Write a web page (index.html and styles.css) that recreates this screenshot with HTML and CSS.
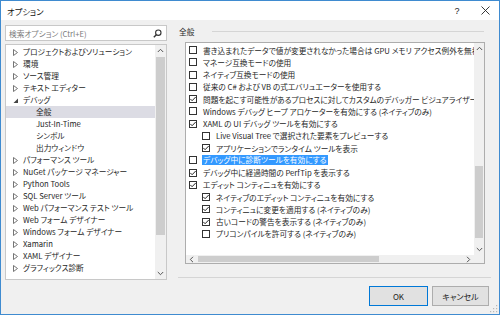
FILE: index.html
```html
<!DOCTYPE html>
<html lang="ja">
<head>
<meta charset="utf-8">
<link rel="stylesheet" href="styles.css">
</head>
<body>
<div class="window">
  <div class="titlebar">
    <span class="title">オプション</span>
    <span class="tb-btn help">?</span>
    <span class="tb-btn close">
      <svg width="9" height="9" viewBox="0 0 9 9"><path d="M0.5 0.5 L8.5 8.5 M8.5 0.5 L0.5 8.5" stroke="#222" stroke-width="0.9" fill="none"/></svg>
    </span>
  </div>
  <div class="main">
    <div class="left">
      <div class="search">
        <span class="ph">検索オプション (Ctrl+E)</span>
        <svg class="mag" width="9" height="9" viewBox="0 0 9 9"><circle cx="5.3" cy="3.7" r="2.7" fill="none" stroke="#333" stroke-width="1.1"/><path d="M3.3 5.7 L0.8 8.2" stroke="#333" stroke-width="1.4"/></svg>
      </div>
      <div class="tree">
        <div class="tree-list">
          <div class="trow"><span class="exp"><svg width="5" height="7" viewBox="0 0 5 7"><path d="M0.5 0.5 L4.5 3.5 L0.5 6.5 Z" fill="none" stroke="#666" stroke-width="0.9"/></svg></span>プロジェクトおよびソリューション</div>
          <div class="trow"><span class="exp"><svg width="5" height="7" viewBox="0 0 5 7"><path d="M0.5 0.5 L4.5 3.5 L0.5 6.5 Z" fill="none" stroke="#666" stroke-width="0.9"/></svg></span>環境</div>
          <div class="trow"><span class="exp"><svg width="5" height="7" viewBox="0 0 5 7"><path d="M0.5 0.5 L4.5 3.5 L0.5 6.5 Z" fill="none" stroke="#666" stroke-width="0.9"/></svg></span>ソース管理</div>
          <div class="trow"><span class="exp"><svg width="5" height="7" viewBox="0 0 5 7"><path d="M0.5 0.5 L4.5 3.5 L0.5 6.5 Z" fill="none" stroke="#666" stroke-width="0.9"/></svg></span>テキスト エディター</div>
          <div class="trow"><span class="exp"><svg width="5" height="7" viewBox="0 0 5 7"><path d="M5 1.5 L5 6 L0.5 6 Z" fill="#444"/></svg></span>デバッグ</div>
          <div class="trow child sel">全般</div>
          <div class="trow child">Just-In-Time</div>
          <div class="trow child">シンボル</div>
          <div class="trow child">出力ウィンドウ</div>
          <div class="trow"><span class="exp"><svg width="5" height="7" viewBox="0 0 5 7"><path d="M0.5 0.5 L4.5 3.5 L0.5 6.5 Z" fill="none" stroke="#666" stroke-width="0.9"/></svg></span>パフォーマンス ツール</div>
          <div class="trow"><span class="exp"><svg width="5" height="7" viewBox="0 0 5 7"><path d="M0.5 0.5 L4.5 3.5 L0.5 6.5 Z" fill="none" stroke="#666" stroke-width="0.9"/></svg></span>NuGet パッケージ マネージャー</div>
          <div class="trow"><span class="exp"><svg width="5" height="7" viewBox="0 0 5 7"><path d="M0.5 0.5 L4.5 3.5 L0.5 6.5 Z" fill="none" stroke="#666" stroke-width="0.9"/></svg></span>Python Tools</div>
          <div class="trow"><span class="exp"><svg width="5" height="7" viewBox="0 0 5 7"><path d="M0.5 0.5 L4.5 3.5 L0.5 6.5 Z" fill="none" stroke="#666" stroke-width="0.9"/></svg></span>SQL Server ツール</div>
          <div class="trow"><span class="exp"><svg width="5" height="7" viewBox="0 0 5 7"><path d="M0.5 0.5 L4.5 3.5 L0.5 6.5 Z" fill="none" stroke="#666" stroke-width="0.9"/></svg></span>Web パフォーマンス テスト ツール</div>
          <div class="trow"><span class="exp"><svg width="5" height="7" viewBox="0 0 5 7"><path d="M0.5 0.5 L4.5 3.5 L0.5 6.5 Z" fill="none" stroke="#666" stroke-width="0.9"/></svg></span>Web フォーム デザイナー</div>
          <div class="trow"><span class="exp"><svg width="5" height="7" viewBox="0 0 5 7"><path d="M0.5 0.5 L4.5 3.5 L0.5 6.5 Z" fill="none" stroke="#666" stroke-width="0.9"/></svg></span>Windows フォーム デザイナー</div>
          <div class="trow"><span class="exp"><svg width="5" height="7" viewBox="0 0 5 7"><path d="M0.5 0.5 L4.5 3.5 L0.5 6.5 Z" fill="none" stroke="#666" stroke-width="0.9"/></svg></span>Xamarin</div>
          <div class="trow"><span class="exp"><svg width="5" height="7" viewBox="0 0 5 7"><path d="M0.5 0.5 L4.5 3.5 L0.5 6.5 Z" fill="none" stroke="#666" stroke-width="0.9"/></svg></span>XAML デザイナー</div>
          <div class="trow"><span class="exp"><svg width="5" height="7" viewBox="0 0 5 7"><path d="M0.5 0.5 L4.5 3.5 L0.5 6.5 Z" fill="none" stroke="#666" stroke-width="0.9"/></svg></span>グラフィックス診断</div>
        </div>
        <div class="vscroll">
          <svg class="arr" width="7" height="5" viewBox="0 0 7 5"><path d="M0.8 4 L3.5 1.3 L6.2 4" fill="none" stroke="#555" stroke-width="1"/></svg>
          <div class="track"><div class="thumb tree-thumb"></div></div>
          <svg class="arr" width="7" height="5" viewBox="0 0 7 5"><path d="M0.8 1 L3.5 3.7 L6.2 1" fill="none" stroke="#555" stroke-width="1"/></svg>
        </div>
      </div>
    </div>
    <div class="right">
      <div class="ghead"><span class="gtitle">全般</span><span class="grule"></span></div>
      <div class="listbox">
        <div class="list-main">
          <div class="rows">
            <div class="crow"><span class="cb"></span>書き込まれたデータで値が変更されなかった場合は GPU メモリ アクセス例外を無視する</div>
            <div class="crow"><span class="cb"></span>マネージ互換モードの使用</div>
            <div class="crow"><span class="cb"></span>ネイティブ互換モードの使用</div>
            <div class="crow"><span class="cb"></span>従来の C# および VB の式エバリュエーターを使用する</div>
            <div class="crow"><span class="cb on"><svg width="8" height="8" viewBox="0 0 8 8"><path d="M1.3 3.9 L3.1 5.7 L6.7 2" fill="none" stroke="#222" stroke-width="1"/></svg></span>問題を起こす可能性があるプロセスに対してカスタムのデバッガー ビジュアライザーを使用する</div>
            <div class="crow"><span class="cb"></span>Windows デバッグ ヒープ アロケーターを有効にする (ネイティブのみ)</div>
            <div class="crow"><span class="cb on"><svg width="8" height="8" viewBox="0 0 8 8"><path d="M1.3 3.9 L3.1 5.7 L6.7 2" fill="none" stroke="#222" stroke-width="1"/></svg></span>XAML の UI デバッグ ツールを有効にする</div>
            <div class="crow sub"><span class="cb"></span>Live Visual Tree で選択された要素をプレビューする</div>
            <div class="crow sub"><span class="cb on"><svg width="8" height="8" viewBox="0 0 8 8"><path d="M1.3 3.9 L3.1 5.7 L6.7 2" fill="none" stroke="#222" stroke-width="1"/></svg></span>アプリケーションでランタイム ツールを表示</div>
            <div class="crow"><span class="cb"></span><span class="hl">デバッグ中に診断ツールを有効にする</span></div>
            <div class="crow"><span class="cb on"><svg width="8" height="8" viewBox="0 0 8 8"><path d="M1.3 3.9 L3.1 5.7 L6.7 2" fill="none" stroke="#222" stroke-width="1"/></svg></span>デバッグ中に経過時間の PerfTip を表示する</div>
            <div class="crow"><span class="cb on"><svg width="8" height="8" viewBox="0 0 8 8"><path d="M1.3 3.9 L3.1 5.7 L6.7 2" fill="none" stroke="#222" stroke-width="1"/></svg></span>エディット コンティニュを有効にする</div>
            <div class="crow sub"><span class="cb on"><svg width="8" height="8" viewBox="0 0 8 8"><path d="M1.3 3.9 L3.1 5.7 L6.7 2" fill="none" stroke="#222" stroke-width="1"/></svg></span>ネイティブのエディット コンティニュを有効にする</div>
            <div class="crow sub"><span class="cb on"><svg width="8" height="8" viewBox="0 0 8 8"><path d="M1.3 3.9 L3.1 5.7 L6.7 2" fill="none" stroke="#222" stroke-width="1"/></svg></span>コンティニュに変更を適用する (ネイティブのみ)</div>
            <div class="crow sub"><span class="cb on"><svg width="8" height="8" viewBox="0 0 8 8"><path d="M1.3 3.9 L3.1 5.7 L6.7 2" fill="none" stroke="#222" stroke-width="1"/></svg></span>古いコードの警告を表示する (ネイティブのみ)</div>
            <div class="crow sub"><span class="cb"></span>プリコンパイルを許可する (ネイティブのみ)</div>
          </div>
          <div class="vscroll">
            <svg class="arr" width="7" height="5" viewBox="0 0 7 5"><path d="M0.8 4 L3.5 1.3 L6.2 4" fill="none" stroke="#555" stroke-width="1"/></svg>
            <div class="track"><div class="thumb list-thumb"></div></div>
            <svg class="arr" width="7" height="5" viewBox="0 0 7 5"><path d="M0.8 1 L3.5 3.7 L6.2 1" fill="none" stroke="#555" stroke-width="1"/></svg>
          </div>
        </div>
        <div class="hbar">
          <div class="hscroll">
            <svg class="arr" width="5" height="7" viewBox="0 0 5 7"><path d="M4 0.8 L1.3 3.5 L4 6.2" fill="none" stroke="#555" stroke-width="1"/></svg>
            <div class="htrack"><div class="hthumb"></div></div>
            <svg class="arr" width="5" height="7" viewBox="0 0 5 7"><path d="M1 0.8 L3.7 3.5 L1 6.2" fill="none" stroke="#555" stroke-width="1"/></svg>
          </div>
          <div class="corner"></div>
        </div>
      </div>
      <div class="gfoot"></div>
    </div>
  </div>
  <div class="footer">
    <button class="btn default">OK</button>
    <button class="btn">キャンセル</button>
  </div>
  <svg class="grip" width="8" height="8" viewBox="0 0 8 8"><g fill="#b8b8b8"><rect x="6" y="0" width="1.2" height="1.2"/><rect x="3" y="3" width="1.2" height="1.2"/><rect x="6" y="3" width="1.2" height="1.2"/><rect x="0" y="6" width="1.2" height="1.2"/><rect x="3" y="6" width="1.2" height="1.2"/><rect x="6" y="6" width="1.2" height="1.2"/></g></svg>
</div>
</body>
</html>
```

FILE: styles.css
```css
* { box-sizing: border-box; }
html, body { margin: 0; padding: 0; }
body {
  font-family: "Noto Sans CJK JP", "Noto Sans", sans-serif;
  font-size: 7.7px;
  font-feature-settings: "palt";
  color: #262626;
  background: #f0f0f0;
}
.window {
  position: relative;
  width: 500px;
  height: 315px;
  border: 1px solid #3f8bd0;
  background: #f0f0f0;
  display: flex;
  flex-direction: column;
}
.titlebar {
  height: 19px;
  background: #fff;
  display: flex;
  align-items: center;
  padding-left: 6px;
  flex: none;
}
.title { flex: 1; font-size: 8.3px; color: #111; }
.tb-btn {
  width: 28px;
  height: 19px;
  display: flex;
  align-items: center;
  justify-content: center;
  font-family: "Liberation Sans", sans-serif;
  font-size: 9px;
  color: #222;
}
.main {
  display: flex;
  padding: 5px 0 0 4px;
  height: 263px;
  flex: none;
}
.left {
  width: 162px;
  display: flex;
  flex-direction: column;
  gap: 3px;
}
.search {
  height: 16px;
  background: #fff;
  border: 1px solid #c8c8c8;
  display: flex;
  align-items: center;
  padding: 0 4px 0 3px;
}
.ph { flex: 1; color: #7a7a7a; white-space: nowrap; }
.mag { flex: none; }
.tree {
  height: 236px;
  background: #fff;
  border: 1px solid #c8c8c8;
  display: flex;
  overflow: hidden;
}
.tree-list {
  flex: 1;
  padding-top: 1px;
  overflow: hidden;
}
.trow {
  height: 12px;
  line-height: 12px;
  display: flex;
  align-items: center;
  white-space: nowrap;
  padding-left: 7px;
}
.trow.child { padding-left: 30px; }
.trow.sel { background: #dcdce4; }
.exp {
  width: 10px;
  flex: none;
  display: flex;
  align-items: center;
}
.exp svg { display: block; }
.vscroll {
  width: 11px;
  flex: none;
  background: #f0f0f0;
  display: flex;
  flex-direction: column;
  align-items: center;
}
.vscroll .arr { flex: none; margin: 3px 0; display: block; }
.track { flex: 1; width: 100%; padding: 0 1px; display: flex; flex-direction: column; }
.thumb { background: #cdcdcd; width: 100%; }
.tree-thumb { margin-top: 1px; height: 178px; }
.list-thumb { margin-top: 112px; height: 72px; }

.right {
  margin-left: 11px;
  width: 314px;
  display: flex;
  flex-direction: column;
}
.ghead {
  height: 12px;
  display: flex;
  align-items: center;
  padding-left: 1px;
}
.gtitle { flex: none; width: 33px; }
.grule { flex: none; width: 272px; height: 1px; background: #d5d5d5; margin-top: 1px; }
.listbox {
  margin: 5px 0 0 7px;
  width: 300px;
  height: 222px;
  background: #fff;
  border: 1px solid #adadad;
  display: flex;
  flex-direction: column;
}
.list-main { flex: 1; display: flex; min-height: 0; }
.rows {
  flex: 1;
  overflow: hidden;
  padding-top: 1px;
}
.crow {
  height: 12.25px;
  display: flex;
  align-items: center;
  white-space: nowrap;
  padding-left: 3px;
}
.crow.sub { padding-left: 16px; }
.cb {
  width: 8px;
  height: 8px;
  flex: none;
  border: 1px solid #333;
  background: #fff;
  margin-right: 6px;
  position: relative;
}
.cb svg { position: absolute; left: -1px; top: -1px; }
.hl { background: #3399ff; color: #fff; padding: 0 1px; margin-left: -1px; line-height: 10px; }
.list-main .vscroll { width: 10px; }
.hbar { height: 8px; display: flex; flex: none; }
.hscroll {
  flex: 1;
  background: #f0f0f0;
  display: flex;
  align-items: center;
}
.hscroll .arr { margin: 0 3px; flex: none; }
.htrack { flex: 1; height: 100%; padding: 1px 0; }
.hthumb { margin-left: 1px; width: 181px; height: 100%; background: #cdcdcd; }
.corner { width: 10px; background: #f0f0f0; }
.gfoot {
  margin-top: 13px;
  height: 1px;
  background: #d5d5d5;
  width: 313px;
}
.footer {
  display: flex;
  justify-content: flex-end;
  gap: 4px;
  padding: 3px 10px 0 0;
}
.btn {
  height: 20px;
  font-family: "Noto Sans CJK JP", "Noto Sans", sans-serif;
  font-size: 8px;
  font-feature-settings: "palt";
  background: #e1e1e1;
  border: 1px solid #adadad;
  color: #1a1a1a;
  padding: 0;
  width: 57px;
}
.btn.default { border: 1px solid #0078d7; width: 59px; }
.grip { position: absolute; right: 1px; bottom: 1px; }
```
